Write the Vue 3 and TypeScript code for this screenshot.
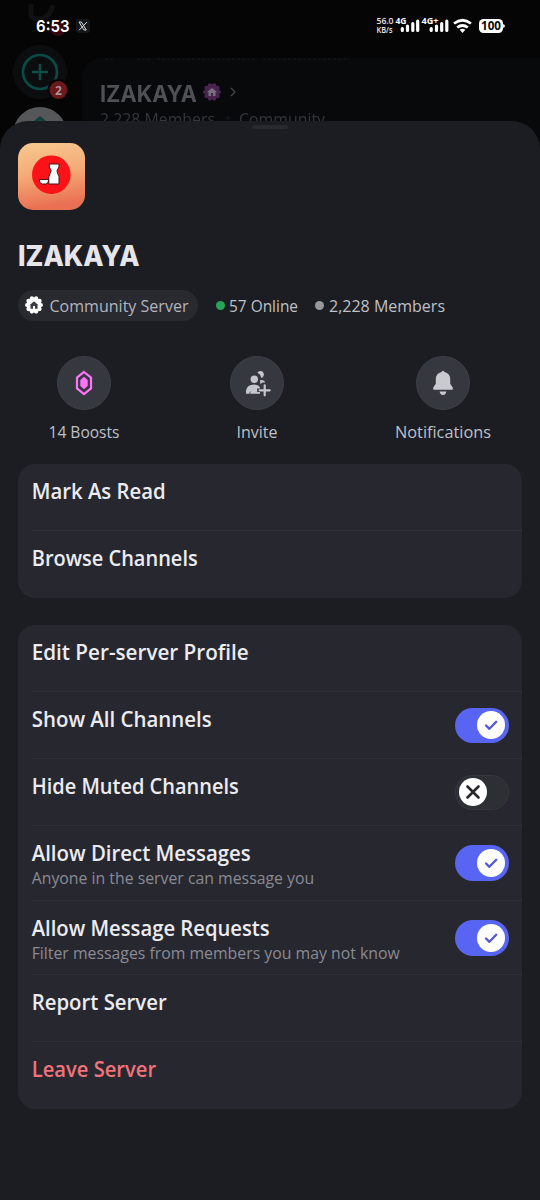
<script setup lang="ts">
interface Row {
  label: string
  note?: string
  toggle?: 'on' | 'off'
  danger?: boolean
  width: number
  noteWidth?: number
}

const groups: Row[][] = [
  [
    { label: 'Mark As Read', width: 134 },
    { label: 'Browse Channels', width: 166 },
  ],
  [
    { label: 'Edit Per-server Profile', width: 217 },
    { label: 'Show All Channels', toggle: 'on', width: 180 },
    { label: 'Hide Muted Channels', toggle: 'off', width: 207 },
    { label: 'Allow Direct Messages', note: 'Anyone in the server can message you', toggle: 'on', width: 219, noteWidth: 282.5 },
    { label: 'Allow Message Requests', note: 'Filter messages from members you may not know', toggle: 'on', width: 238, noteWidth: 368 },
    { label: 'Report Server', width: 135 },
    { label: 'Leave Server', danger: true, width: 124.5 },
  ],
]
const badge = Array.from({ length: 10 }, (_, i) => ({
  x: 10 + 6.9 * Math.cos((i * Math.PI) / 5),
  y: 10 + 6.9 * Math.sin((i * Math.PI) / 5),
}))
</script>

<template>
  <main class="screen">
    <div class="behind">
      <svg class="backdrop" viewBox="0 0 540 150" width="540" height="150">
        <path d="M82 150V80q0-22 22-22H540V150z" fill="#08090b" />
        <path d="M105 59h10M137 59h14M157 59h100M263 59h86" stroke="#17181b" stroke-dasharray="3 2" />
        <path d="M31 4v10q0 5 6 5h4q10-3 12-14" fill="none" stroke="#101113" stroke-width="5" />
        <circle cx="58" cy="28" r="8" fill="#35090b" />
        <circle cx="40" cy="72" r="27" fill="#0c0d0e" />
        <circle cx="40" cy="72" r="17" fill="none" stroke="#0a4b48" stroke-width="2.6" />
        <path d="M40 64v16M32 72h16" stroke="#0b4d47" stroke-width="2.4" />
        <circle cx="58.500" cy="90" r="11" fill="#050506" />
        <circle cx="58.500" cy="90" r="9" fill="#6b191c" />
        <circle cx="40" cy="134" r="27" fill="#555759" />
        <path d="M33 124l7-6 7 6" fill="none" stroke="#0b3f3b" stroke-width="3" />
        <text x="58.500" y="94.500" class="count" text-anchor="middle">2</text>
        <text x="100" y="101.500" class="back-title" textLength="97" lengthAdjust="spacingAndGlyphs">IZAKAYA</text>
        <g fill="#4b2350" transform="translate(202 82)">
          <circle cx="10" cy="10" r="7.500" />
          <circle v-for="(p, i) in badge" :key="i" :cx="p.x" :cy="p.y" r="2.100" />
          <path d="M5 10l5-4 5 4h-1.500v4h-2.500v-3h-2v3H6.500v-4z" fill="#77717b" />
        </g>
        <path d="M231 88l4 4-4 4" fill="none" stroke="#46474a" stroke-width="1.300" />
        <text x="100" y="125" class="back-sub" textLength="115" lengthAdjust="spacingAndGlyphs">2,228 Members</text>
        <circle cx="228" cy="118" r="2" fill="#141518" />
        <text x="239" y="125" class="back-sub" textLength="86" lengthAdjust="spacingAndGlyphs">Community</text>
      </svg>
      <svg class="status" viewBox="0 0 540 50" width="540" height="50">
        <text x="36" y="32" class="clock" textLength="33.5" lengthAdjust="spacingAndGlyphs">6:53</text>
        <rect x="76" y="19" width="14" height="14" rx="3" fill="#14171a" />
        <path d="M79 22h2.300l5 8H84zM87 22l-8 8.300" fill="none" stroke="#ddd" stroke-width="1" />
        <text x="376.500" y="23.500" class="tiny" textLength="17" lengthAdjust="spacingAndGlyphs">56.0</text>
        <text x="376.500" y="33" class="tiny" textLength="16" lengthAdjust="spacingAndGlyphs">KB/s</text>
        <text x="395.500" y="23.500" class="net" textLength="11" lengthAdjust="spacingAndGlyphs">4G</text>
        <text x="421.500" y="23.500" class="net" textLength="17" lengthAdjust="spacingAndGlyphs">4G+</text>
        <path d="M402.300 28.500v2M407.500 26v4.500M412.800 23.500v7M417.700 21v9.500M431.200 28.500v2M436.500 26v4.500M441.700 23.500v7M446.800 21v9.500" stroke="#fff" stroke-width="3.200" stroke-linecap="round" />
        <g fill="none" stroke="#fff" stroke-width="2.700">
          <path d="M454 23.500q8.500-6.500 17 0M457.200 27.500q5.300-4 10.600 0" />
          <path d="M459.700 29.800q2.800-1.900 5.600 0l-2.800 3.200z" fill="#fff" stroke="none" />
        </g>
        <rect x="479" y="19" width="24" height="14" rx="4.500" fill="#fff" />
        <path d="M503.700 24.500q1.300 1.500 0 3z" fill="#fff" stroke="#fff" />
        <text x="481" y="30.300" class="battery" textLength="20" lengthAdjust="spacingAndGlyphs">100</text>
      </svg>
    </div>

    <section class="sheet">
      <div class="handle"></div>
      <svg class="server-icon" viewBox="0 0 67 67" width="67" height="67">
        <defs>
          <linearGradient id="peach" x1="0" y1="0" x2="0.150" y2="1">
            <stop offset="0" stop-color="#f7c990" />
            <stop offset="0.500" stop-color="#f5aa78" />
            <stop offset="1" stop-color="#e97052" />
          </linearGradient>
        </defs>
        <rect width="67" height="67" rx="15" fill="url(#peach)" />
        <circle cx="33.300" cy="31.700" r="19.300" fill="#fc1219" />
        <path d="M31.300 21h9.700v3l-2 3.500q0 3 2 5.500v8H30.800v-7q1-3 2.400-6.500l-1.900-3.500zM21.500 36.500h9v1.500q-.8 3-2.500 3h-3.500q-3-.5-3-3z" fill="#fff" stroke="#4b1519" stroke-width="1" />
      </svg>
      <svg class="title" width="140" height="34"><text x="0" y="27.500" textLength="121.500" lengthAdjust="spacingAndGlyphs">IZAKAYA</text></svg>
      <div class="stats">
        <div class="pill">
          <svg viewBox="0 0 20 20" width="20" height="20" fill="#fff">
            <circle cx="10" cy="10" r="7.500" />
            <circle v-for="(p, i) in badge" :key="i" :cx="p.x" :cy="p.y" r="2.100" />
            <path d="M5.500 10.300L10 6.300l4.500 4h-1v3.500H11v-2.800H9v2.800H6.500v-3.500z" fill="#3b3b43" />
          </svg>
          <svg class="meta" width="141" height="24"><text x="-0.500" y="18" textLength="139" lengthAdjust="spacingAndGlyphs">Community Server</text></svg>
        </div>
        <i class="dot online"></i>
        <svg class="meta" width="70" height="24"><text x="0" y="18" textLength="69" lengthAdjust="spacingAndGlyphs">57 Online</text></svg>
        <i class="dot members"></i>
        <svg class="meta" width="118" height="24"><text x="0" y="18" textLength="116" lengthAdjust="spacingAndGlyphs">2,228 Members</text></svg>
      </div>

      <div class="actions">
        <div class="action boost">
          <div class="circle">
            <svg viewBox="0 0 28 28" width="28" height="28">
              <path d="M14 3l7 5.600v10.800l-7 5.600-7-5.600V8.600z" fill="none" stroke="#ff73fa" stroke-width="2.200" />
              <path d="M14 7.800l3.700 3.200v6L14 20.200 10.300 17v-6z" fill="#ff73fa" />
            </svg>
          </div>
          <svg class="meta" width="72" height="24"><text x="0.500" y="18" textLength="71" lengthAdjust="spacingAndGlyphs">14 Boosts</text></svg>
        </div>
        <div class="action invite">
          <div class="circle">
            <svg viewBox="0 0 28 28" width="28" height="28" fill="#c5c6cc">
              <path d="M14.400 3.700a3.500 3.500 0 1 1 3.800 5.200q-.5-3.600-3.800-5.200z" />
              <circle cx="11.300" cy="10.200" r="3.700" />
              <path d="M17 11.300q4.500-1 5.300 2.300h-3l-2 1.600zM3 24.800v-3q1-6.300 8.300-6.300 4 0 5.600 2.500v1.500h-2.700v3.600H17v1.700H7.300v-3.300l-1 3.300z" />
              <path d="M21.700 16.300v10M16.700 21.300h10" fill="none" stroke="#c5c6cc" stroke-width="2.200" stroke-linecap="round" />
            </svg>
          </div>
          <svg class="meta" width="42" height="24"><text x="0.500" y="18" textLength="41" lengthAdjust="spacingAndGlyphs">Invite</text></svg>
        </div>
        <div class="action notify">
          <div class="circle">
            <svg viewBox="0 0 28 28" width="28" height="28" fill="#c9cad0">
              <path d="M12.500 3q1.500-2.500 3 0 5.700 1.400 5.700 7.300v4.500q1.500 2.200 2.600 4 .6 2-1.600 2H5.800q-2.200 0-1.600-2 1.100-1.800 2.600-4v-4.500q0-5.900 5.700-7.300zM10.500 22.500h7q-1 3.600-3.500 3.600t-3.500-3.600z" />
            </svg>
          </div>
          <svg class="meta" width="97" height="24"><text x="0" y="18" textLength="96" lengthAdjust="spacingAndGlyphs">Notifications</text></svg>
        </div>
      </div>

      <div v-for="(group, g) in groups" :key="g" class="card">
        <div v-for="row in group" :key="row.label" class="row" :class="{ tall: row.note, danger: row.danger }">
          <div class="copy">
            <svg class="label" width="300" height="28"><text x="-0.300" y="21.500" :textLength="row.width" lengthAdjust="spacingAndGlyphs">{{ row.label }}</text></svg>
            <svg v-if="row.note" class="note" width="390" height="24"><text x="-0.300" y="17.500" :textLength="row.noteWidth" lengthAdjust="spacingAndGlyphs">{{ row.note }}</text></svg>
          </div>
          <div v-if="row.toggle" class="toggle" :class="row.toggle">
            <div class="knob">
              <svg v-if="row.toggle === 'on'" viewBox="0 0 28 28" width="28" height="28"><path d="M9 14.500l3.400 3.300 6.800-7" fill="none" stroke="#5058d8" stroke-width="2.300" stroke-linecap="round" stroke-linejoin="round" /></svg>
              <svg v-else viewBox="0 0 28 28" width="28" height="28"><path d="M8.500 8.500l11 11M19.500 8.500l-11 11" stroke="#27282e" stroke-width="2.600" stroke-linecap="round" /></svg>
            </div>
          </div>
        </div>
      </div>
    </section>
  </main>
</template>

<style>
body { background: #050506; }
</style>

<style scoped>
.screen {
  width: 540px;
  height: 1200px;
  overflow: hidden;
  background: #050505;
  font-family: "Open Sans", "Noto Sans", sans-serif;
}
svg { display: block; flex: none; overflow: visible; }
.behind { position: relative; height: 121px; }
.backdrop, .status { position: absolute; top: 0; left: 0; }
.backdrop { filter: blur(0.3px); }
.count { fill: #a59a9b; font-size: 12px; font-weight: 700; }
.back-title { fill: #505154; font-family: Inter, sans-serif; font-size: 23px; font-weight: 700; }
.back-sub { fill: #35363a; font-size: 16px; }
.clock { fill: #fff; font-family: Inter, sans-serif; font-size: 16.500px; font-weight: 600; }
.tiny { fill: #e8e8e8; font-size: 8.500px; font-weight: 600; }
.net { fill: #fff; font-size: 8.500px; font-weight: 700; }
.battery { fill: #080808; font-size: 12px; font-weight: 700; }
.sheet {
  position: relative;
  box-sizing: border-box;
  height: 1079px;
  padding: 4px 18px 0;
  border-radius: 28px 28px 0 0;
  background: #1c1d22;
}
.handle { width: 36px; height: 4px; margin: 0 auto; border-radius: 2px; background: #292a30; }
.server-icon { margin-top: 14px; }
.title { margin-top: 28px; fill: #e5e5ea; font-family: Inter, sans-serif; font-size: 28px; font-weight: 800; }
.stats { display: flex; align-items: center; height: 32px; margin-top: 17px; }
.pill {
  display: flex;
  align-items: center;
  gap: 6px;
  box-sizing: border-box;
  width: 180px;
  height: 31px;
  padding-left: 6px;
  border-radius: 16px;
  background: #292930;
}
.meta { position: relative; top: 1px; fill: #bfc0c7; font-size: 16px; font-weight: 480; }
.pill .meta { fill: #b4b5bf; }
.dot { width: 9px; height: 9px; border-radius: 50%; }
.online { margin: 0 4px 0 18px; background: #29a35a; }
.members { margin: 0 5px 0 16px; background: #96979b; }
.actions { display: flex; height: 124px; padding-top: 35px; box-sizing: border-box; }
.action { display: flex; flex-direction: column; align-items: center; width: 100px; gap: 9px; }
.boost { margin-left: 16px; }
.invite { margin-left: 73px; }
.notify { margin-left: 86px; }
.circle {
  display: flex;
  flex: none;
  align-items: center;
  justify-content: center;
  box-sizing: border-box;
  width: 54px;
  height: 54px;
  border: 1px solid #3d3e47;
  border-radius: 50%;
  background: #363840;
}
.card { margin-top: 19px; overflow: hidden; border-radius: 17px; background: #27272f; }
.card + .card { margin-top: 27.500px; }
.row { position: relative; display: flex; box-sizing: border-box; height: 66.900px; padding: 13px 13px 0 14px; }
.row.tall { height: 74.700px; }
.row:not(:last-child)::after {
  content: "";
  position: absolute;
  right: 0;
  bottom: 0;
  left: 14px;
  height: 1px;
  background: #2f3037;
}
.copy { flex: 1; min-width: 0; }
.label { fill: #ececf0; font-size: 21.500px; font-weight: 540; }
.danger .label { fill: #f0737a; }
.note { margin-top: -1px; fill: #8a8b94; font-size: 15.500px; font-weight: 480; }
.toggle {
  display: flex;
  align-items: center;
  box-sizing: border-box;
  width: 54px;
  height: 35.500px;
  margin-top: 2.500px;
  padding: 0 4px;
  border-radius: 18px;
  background: #5865f2;
}
.tall .toggle { margin-top: 6.500px; }
.toggle.on { justify-content: flex-end; }
.toggle.off { padding: 0 3px; border: 1px solid #36373f; background: #2c2f34; }
.knob { width: 28px; height: 28px; border-radius: 50%; background: #fff; }
</style>
